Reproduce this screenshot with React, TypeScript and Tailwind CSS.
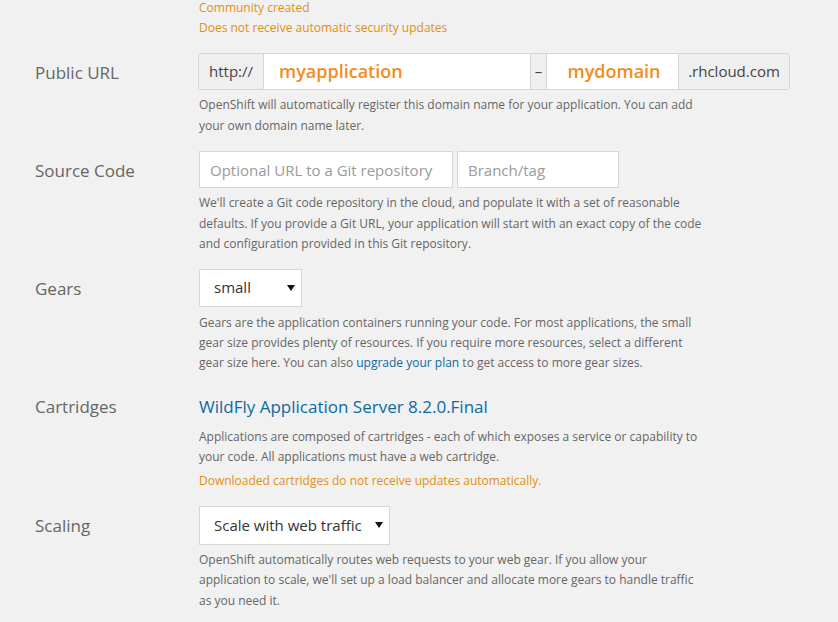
import React from 'react';

const Help: React.FC<{ children: React.ReactNode; className?: string }> = ({ children, className = '' }) => (
  <p className={`w-[505px] text-[12px] leading-[20.5px] text-[#666] ${className}`}>{children}</p>
);

const Row: React.FC<{ label: string; children: React.ReactNode; className?: string; labelClass?: string }> = ({
  label,
  children,
  className = '',
  labelClass = 'pt-[3px]',
}) => (
  <div className={`flex ${className}`}>
    <div className={`w-[164px] shrink-0 h-[37px] flex items-center text-[17px] text-[#666] ${labelClass}`}>{label}</div>
    <div className="flex-1">{children}</div>
  </div>
);

const Caret = () => (
  <svg width="8" height="6" viewBox="0 0 8 6" className="absolute right-[6px] top-1/2 -translate-y-1/2">
    <path d="M0 0h8L4 6z" fill="#111" />
  </svg>
);

const App: React.FC = () => {
  return (
    <div className="w-[838px] h-[622px] overflow-hidden bg-[#f1f1f1] pl-[35px] font-['Open_Sans',sans-serif]">
      <div className="ml-[164px] -mt-[2px] text-[12px] leading-[20px] text-[#e0900f]">
        <div>Community created</div>
        <div>Does not receive automatic security updates</div>
      </div>

      <Row label="Public URL" className="mt-[15px]">
        <div className="flex h-[37px] w-[592px] -ml-[1px] border border-[#d6d6d6] rounded-[3px] overflow-hidden text-[15px]">
          <div className="w-[65px] bg-[#efefef] border-r border-[#d6d6d6] flex items-center justify-center text-[#444]">http://</div>
          <div className="w-[266px] bg-white flex items-center pl-[15px] text-[18px] font-semibold text-[#f28c1c]">myapplication</div>
          <div className="w-[17px] bg-[#efefef] border-x border-[#d6d6d6] flex items-center justify-center text-[#444]">–</div>
          <div className="w-[131px] bg-white flex items-center justify-center pl-[3px] text-[18px] font-semibold text-[#f28c1c]">mydomain</div>
          <div className="flex-1 bg-[#efefef] border-l border-[#d6d6d6] flex items-center justify-center text-[#444]">.rhcloud.com</div>
        </div>
        <Help className="mt-[5px]">
          OpenShift will automatically register this domain name for your application. You can add your own domain name later.
        </Help>
      </Row>

      <Row label="Source Code" className="mt-[15px]">
        <div className="flex gap-[4px]">
          <input
            placeholder="Optional URL to a Git repository"
            className="w-[254px] h-[37px] bg-white border border-[#d6d6d6] px-[10px] text-[15px] placeholder:text-[#9a9a9a] outline-none"
          />
          <input
            placeholder="Branch/tag"
            className="w-[162px] h-[37px] bg-white border border-[#d6d6d6] px-[10px] text-[15px] placeholder:text-[#9a9a9a] outline-none"
          />
        </div>
        <Help className="mt-[5px]">
          We'll create a Git code repository in the cloud, and populate it with a set of reasonable defaults. If you provide a Git URL, your application will start with an exact copy of the code and configuration provided in this Git repository.
        </Help>
      </Row>

      <Row label="Gears" className="mt-[14px]">
        <div className="relative w-[103px] h-[38px] bg-white border border-[#d6d6d6] flex items-center pl-[14px] text-[15px] text-[#333]">
          small
          <Caret />
        </div>
        <Help className="mt-[6px] leading-[20px]">
          Gears are the application containers running your code. For most applications, the small gear size provides plenty of resources. If you require more resources, select a different gear size here. You can also <a className="text-[#0b6aa2]">upgrade your plan</a> to get access to more gear sizes.
        </Help>
      </Row>

      <Row label="Cartridges" className="mt-[16px]" labelClass="">
        <div className="h-[37px] flex items-center text-[17px] text-[#0b6aa2]">WildFly Application Server 8.2.0.Final</div>
        <Help className="mt-[1px] leading-[20px]">
          Applications are composed of cartridges - each of which exposes a service or capability to your code. All applications must have a web cartridge.
        </Help>
        <Help className="mt-[4px] leading-[20px] !text-[#e0900f]">Downloaded cartridges do not receive updates automatically.</Help>
      </Row>

      <Row label="Scaling" className="mt-[15px]" labelClass="pt-[4px]">
        <div className="relative w-[191px] h-[39px] bg-white border border-[#d6d6d6] flex items-center pl-[14px] text-[15px] text-[#333]">
          Scale with web traffic
          <Caret />
        </div>
        <Help className="mt-[5px] leading-[20.5px]">
          OpenShift automatically routes web requests to your web gear. If you allow your application to scale, we'll set up a load balancer and allocate more gears to handle traffic as you need it.
        </Help>
      </Row>
    </div>
  );
};

export default App;
